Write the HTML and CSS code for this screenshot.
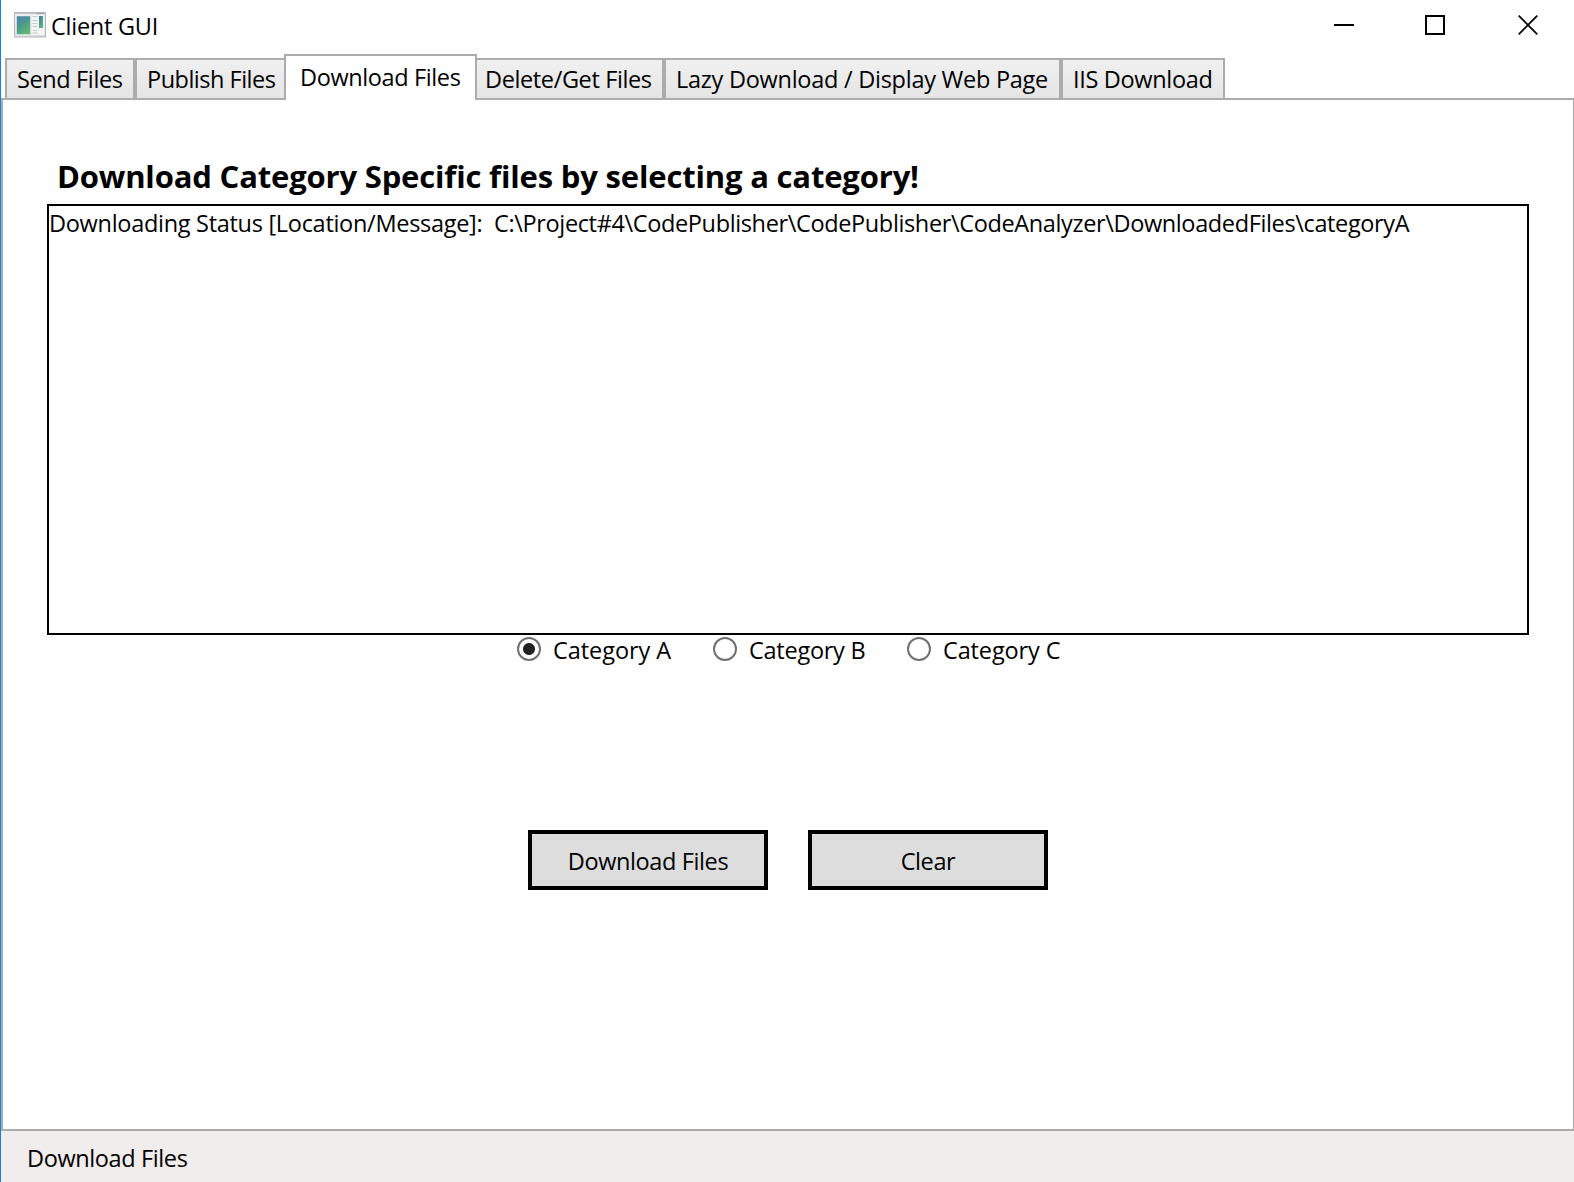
FILE: index.html
```html
<!DOCTYPE html>
<html lang="en">
<head>
<meta charset="utf-8">
<title>Client GUI</title>
<link rel="stylesheet" href="styles.css">
</head>
<body>
<div class="window">
  <header class="titlebar">
    <svg class="app-icon" width="32" height="26" viewBox="0 0 32 26">
      <defs>
        <linearGradient id="pane" x1="0" y1="0" x2="0.6" y2="1"><stop offset="0" stop-color="#4477a0"/><stop offset="0.5" stop-color="#4a9a8c"/><stop offset="1" stop-color="#62b672"/></linearGradient>
        <linearGradient id="frame" x1="0" y1="0" x2="1" y2="1"><stop offset="0" stop-color="#f0f1f3"/><stop offset="1" stop-color="#d3d7dc"/></linearGradient>
      </defs>
      <rect x="0.5" y="0.5" width="31" height="24.5" fill="url(#frame)" stroke="#b3b6ba"/>
      <path d="M1 1.5h30" stroke="#c3c7cc"/><path d="M22 1.5h8" stroke="#9aa0aa"/>
      <rect x="2.5" y="4" width="14" height="18.5" fill="url(#pane)" stroke="#e9f1f2" stroke-width="0.6"/>
      <path d="M3 14Q9 9 16 8V4.5H3Z" fill="#5d93b5" opacity="0.35"/>
      <rect x="17.5" y="3" width="13" height="20" fill="#f4f5f6"/>
      <path d="M18.5 4.5h5M18.5 8.5h5M18.5 11.5h5M18.5 14.5h5M18.5 18.5h5M18.5 21h5" stroke="#c5c8cc"/>
      <rect x="25" y="4" width="4" height="12" fill="url(#pane)"/>
    </svg>
    <span class="app-title">Client GUI</span>
    <div class="controls">
      <svg width="20" height="20" viewBox="0 0 20 20"><path d="M0 10h20" stroke="#000" stroke-width="2"/></svg>
      <svg width="20" height="20" viewBox="0 0 20 20"><rect x="1" y="1" width="18" height="18" fill="none" stroke="#000" stroke-width="2"/></svg>
      <svg width="20" height="20" viewBox="0 0 20 20"><path d="M.7.7 19.3 19.3M19.3.7.7 19.3" stroke="#000" stroke-width="1.8"/></svg>
    </div>
  </header>
  <nav class="tabs">
    <div class="tab send">Send Files</div>
    <div class="tab publish">Publish Files</div>
    <div class="tab selected">Download Files</div>
    <div class="tab delete">Delete/Get Files</div>
    <div class="tab lazy">Lazy Download / Display Web Page</div>
    <div class="tab iis">IIS Download</div>
  </nav>
  <main class="panel">
    <h1 class="heading">Download Category Specific files by selecting a category!</h1>
    <div class="output"><span class="label">Downloading Status [Location/Message]:&nbsp; </span><span class="path">C:\Project#4\CodePublisher\CodePublisher\CodeAnalyzer\DownloadedFiles\categoryA</span></div>
    <div class="radios">
      <label class="radio cat-a checked"><i></i><span>Category A</span></label>
      <label class="radio cat-b"><i></i><span>Category B</span></label>
      <label class="radio cat-c"><i></i><span>Category C</span></label>
    </div>
    <div class="actions">
      <button class="download">Download Files</button>
      <button class="clear">Clear</button>
    </div>
  </main>
  <footer class="statusbar">Download Files</footer>
</div>
</body>
</html>
```
FILE: styles.css
```css
* { box-sizing: border-box; }
body {
  margin: 0;
  background: #fff;
  color: #000;
  font-family: "Open Sans", "Noto Sans", sans-serif;
  font-size: 23.5px;
  line-height: 32px;
  letter-spacing: -0.38px;
  white-space: nowrap;
}
.window {
  display: flex;
  flex-direction: column;
  height: 1182px;
  border-left: 1px solid #1883d7;
  overflow: hidden;
}
.titlebar { display: flex; height: 54px; padding-left: 13px; flex: none; }
.app-icon { margin-top: 12px; }
.app-title { margin: 10px 0 0 5px; letter-spacing: -0.25px; }
.controls { display: flex; gap: 71px; margin: 15px 36px 0 auto; }
.controls svg + svg + svg { margin-left: 2px; }

.tabs { display: flex; align-items: flex-end; height: 46px; padding-left: 4px; flex: none; }
.tab {
  height: 42px;
  border: 2px solid #acacac;
  background: linear-gradient(#f0f0f0, #e5e5e5);
  padding: 3px 0 0 10px;
}
.send { width: 130px; }
.publish { width: 151px; letter-spacing: -0.5px; }
.selected { width: 193px; height: 46px; margin: 0 -2px; padding: 5px 0 0 14px; border-bottom: 0; background: #fff; z-index: 1; }
.delete { width: 189px; padding-left: 8px; }
.lazy { width: 397px; letter-spacing: -0.26px; }
.iis { width: 164px; letter-spacing: -0.33px; }

.panel {
  height: 1033px;
  flex: none;
  margin-top: -2px;
  border: 2px solid #acacac;
  border-right-width: 1px;
}
.heading { margin: 56px 0 0 54px; height: 48px; font-size: 31px; line-height: 40px; font-weight: 700; letter-spacing: -0.17px; }
.output { width: 1482px; height: 431px; margin-left: 44px; padding-top: 1px; border: 2px solid #000; }
.output .label { letter-spacing: -0.29px; }
.output .path { letter-spacing: -0.365px; }
.radios { display: flex; height: 32px; margin: 2px 0 0 514px; }
.radio { display: flex; width: 196px; line-height: 26px; letter-spacing: -0.05px; }
.radio i { width: 24px; height: 24px; border: 2px solid #707070; border-radius: 50%; margin-right: 12px; }
.cat-b { width: 194px; letter-spacing: -0.26px; }
.cat-c { letter-spacing: -0.13px; }
.checked i { background: radial-gradient(circle, #212121 5.5px, #fff 6.5px); }
.actions { display: flex; gap: 40px; margin: 161px 0 0 525px; }
button { width: 240px; height: 60px; padding: 2px 0 0; border: 4px solid #000; background: #ddd; font: inherit; letter-spacing: inherit; color: #000; }
.statusbar { flex: 1; background: #f1edec; padding: 11px 0 0 26px; }
```
